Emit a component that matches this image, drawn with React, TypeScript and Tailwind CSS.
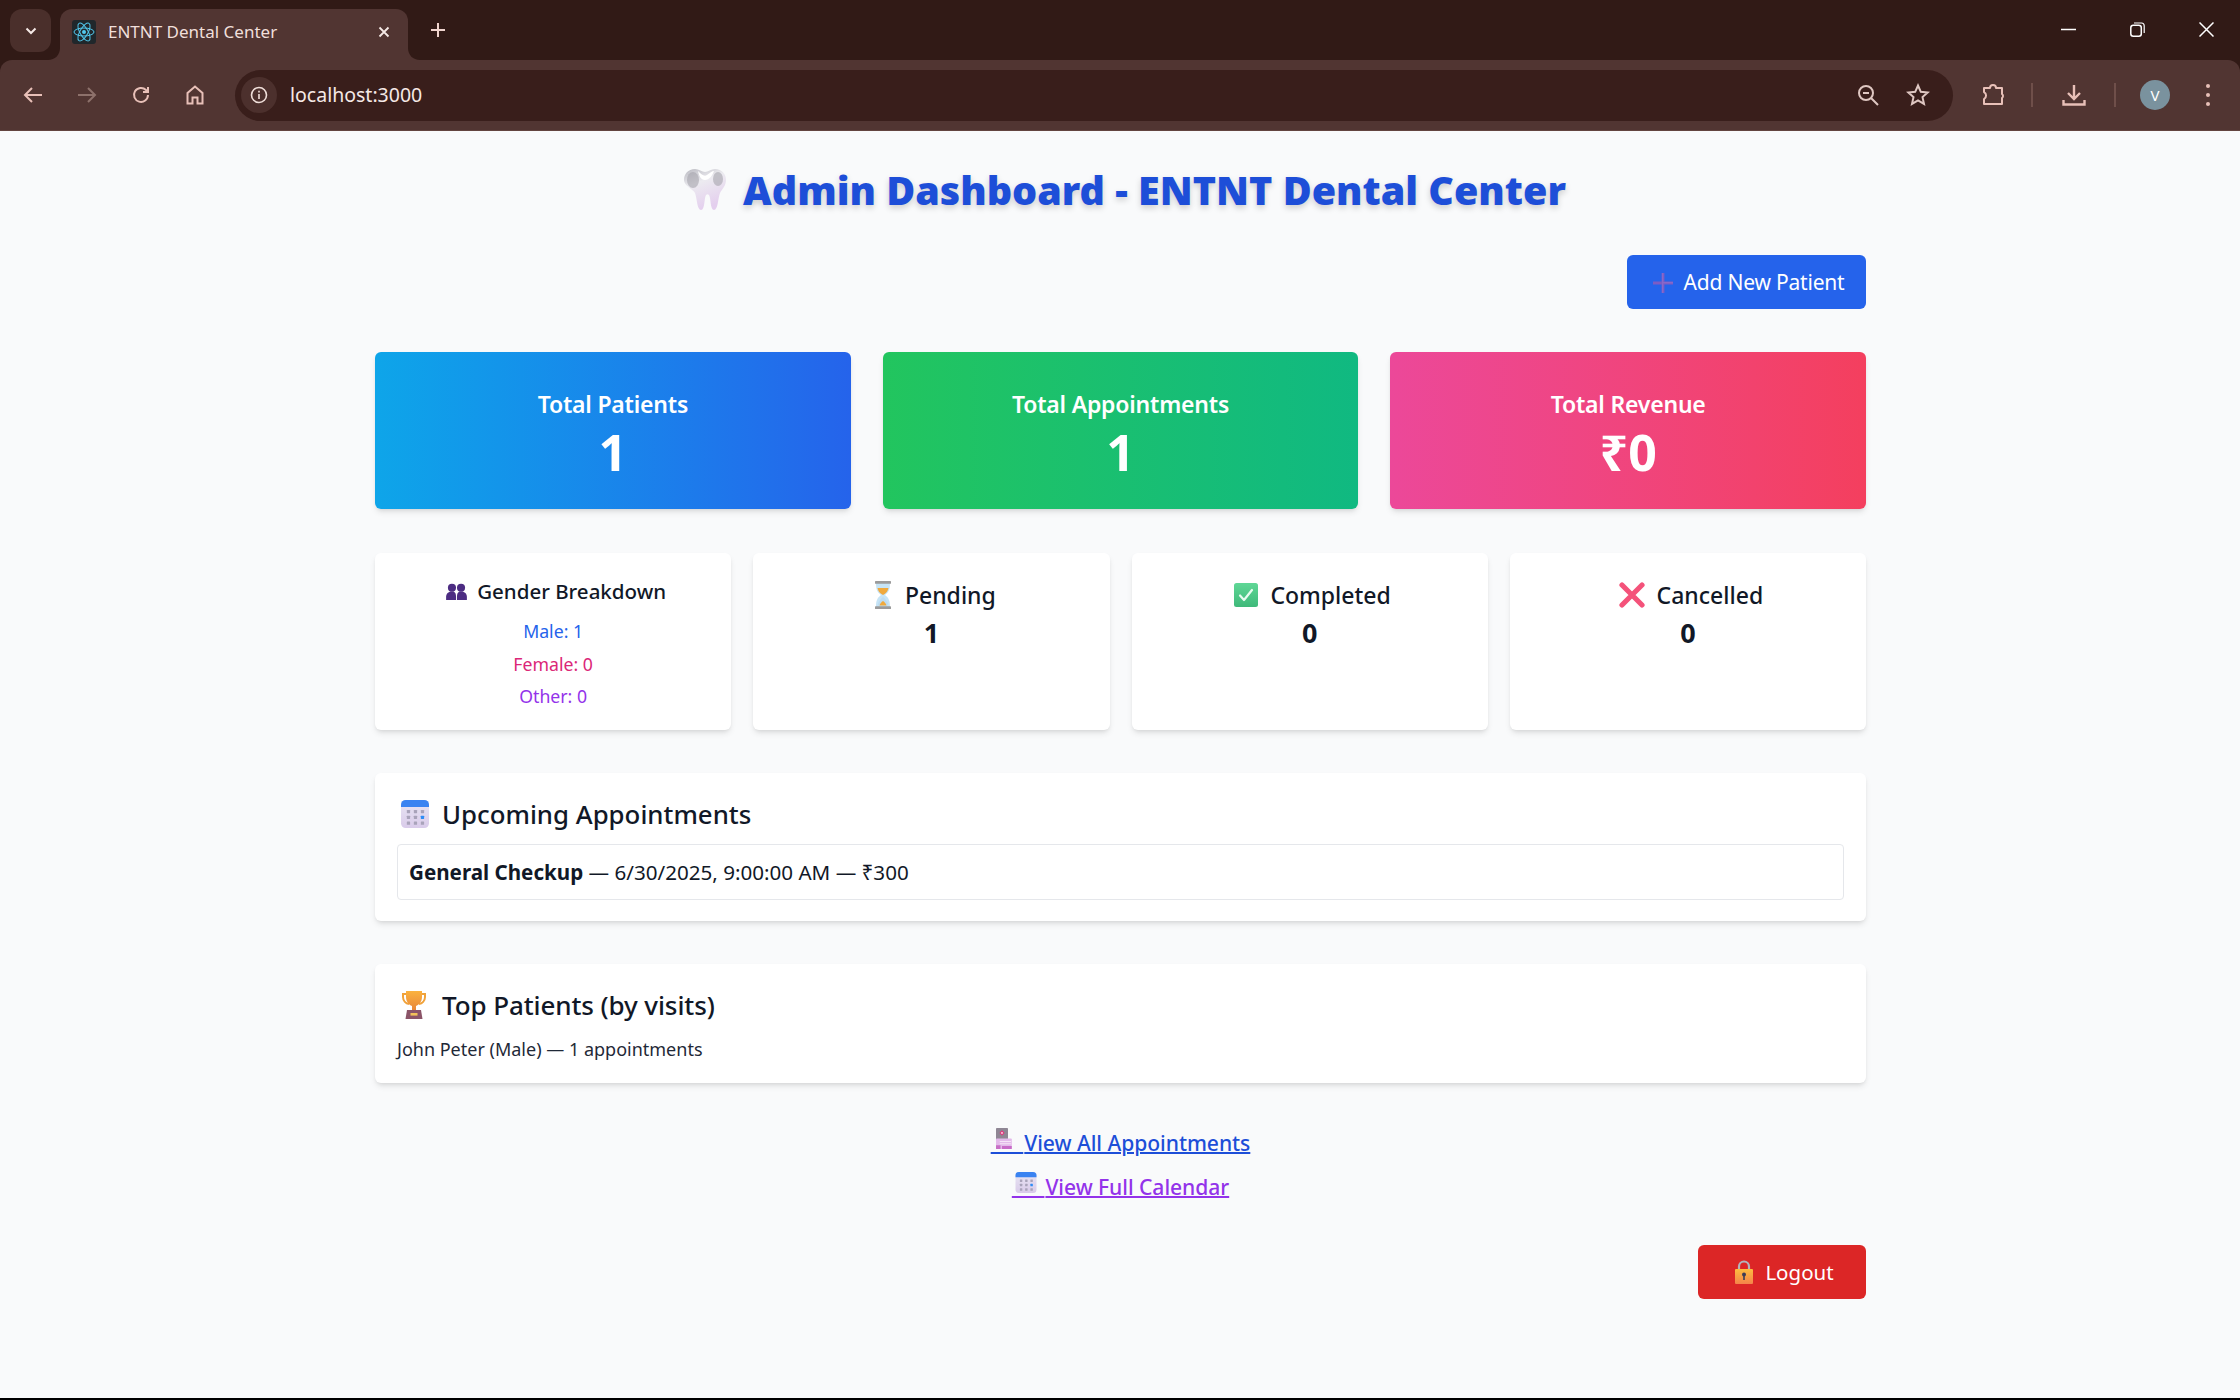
import type { ReactNode } from "react";

const sans = "font-['Noto_Sans','Open_Sans',sans-serif]";

function Tooth({ className }: { className: string }) {
  return (
    <svg viewBox="0 0 44 44" className={className}>
      <defs>
        <linearGradient id="toothFill" x1="0" y1="0" x2="0.4" y2="1">
          <stop offset="0" stopColor="#b9b9c0" />
          <stop offset="0.4" stopColor="#ecebf0" />
          <stop offset="1" stopColor="#e4cfee" />
        </linearGradient>
      </defs>
      <path
        d="M12 1c4 0 7 3 10 3s6-3 10-3c7 0 11 5 11 11 0 6-4 9-6 13-2 5-2 17-6 17-4 0-3-12-5-15-1-1-2-1-3 0-2 3-1 15-5 15-4 0-4-12-6-17C10 21 1 18 1 12 1 6 5 1 12 1z"
        fill="url(#toothFill)"
      />
      <ellipse cx="10" cy="12" rx="6" ry="8" fill="#a5a4ab" opacity="0.6" />
      <ellipse cx="35" cy="11" rx="5" ry="7" fill="#a5a4ab" opacity="0.6" />
      <path d="M15 3c3 3 6 6 9 4 3-2 5-4 7-4-2 6-6 9-9 9-4 0-6-4-7-9z" fill="#ffffff" />
    </svg>
  );
}

function PlusEmoji() {
  return (
    <svg viewBox="0 0 20 20" className="w-5 h-5 shrink-0">
      <path d="M8.6 0h2.8v8.6H20v2.8h-8.6V20H8.6v-8.6H0V8.6h8.6z" fill="#7c5cc4" />
      <path d="M9.2 0h1v9.2H20v1h-9.8V20h-1z" fill="#9a78cf" opacity="0.6" />
    </svg>
  );
}

function People() {
  return (
    <svg viewBox="0 0 22 18" className="w-[21px] h-[17px] shrink-0">
      <g fill="#4c2c82">
        <circle cx="6.2" cy="5" r="4.3" />
        <path d="M0 18v-3.5C0 11.5 2.5 9 5.5 9h1.5c2.5 0 3.5 2.5 3.500 5.500V18z" />
        <circle cx="15.8" cy="5" r="4.3" />
        <path d="M22 18v-3.5c0-3-2.5-5.5-5.5-5.5H15c-2.5 0-3.5 2.5-3.5 5.5V18z" />
      </g>
    </svg>
  );
}

function Hourglass() {
  return (
    <svg viewBox="0 0 20 28" className="w-5 h-7 shrink-0">
      <path d="M3 2h14c0 6-1 9-5 12 4 3 5 6 5 12H3c0-6 1-9 5-12-4-3-5-6-5-12z" fill="#c6e4f6" />
      <path d="M4.500 7h11c-.6 3-2 5-5.500 7-3.500-2-4.900-4-5.500-7z" fill="#f0a93c" />
      <path d="M10 16c-2 1.500-4.500 4-5.500 8.500h11C14.500 20 12 17.500 10 16z" fill="#bcdcf2" />
      <path d="M10 20c-1.500 1-3 2.500-3.500 4.500h7C13 22.500 11.500 21 10 20z" fill="#f0a93c" />
      <rect x="2" y="0" width="16" height="2.800" rx="0.600" fill="#9b9b9b" />
      <rect x="2" y="25.200" width="16" height="2.800" rx="0.600" fill="#9b9b9b" />
    </svg>
  );
}

function CheckBox() {
  return (
    <svg viewBox="0 0 24 24" className="w-6 h-6 shrink-0">
      <defs>
        <linearGradient id="checkFill" x1="0" y1="0" x2="0" y2="1">
          <stop offset="0" stopColor="#5fd796" />
          <stop offset="1" stopColor="#3fb97a" />
        </linearGradient>
      </defs>
      <rect width="24" height="24" rx="2.500" fill="url(#checkFill)" />
      <path d="M6 12.500l4 4.500 8-10" fill="none" stroke="#e8fbf0" strokeWidth="2.200" strokeLinecap="round" strokeLinejoin="round" />
    </svg>
  );
}

function CrossMark() {
  return (
    <svg viewBox="0 0 26 26" className="w-[26px] h-[26px] shrink-0">
      <path d="M3 3l20 20M23 3L3 23" stroke="#f4527a" strokeWidth="5.200" strokeLinecap="round" />
    </svg>
  );
}

function CalendarEmoji({ className }: { className: string }) {
  const dots = [6.5, 11.5, 16.5];
  return (
    <svg viewBox="0 0 24 24" className={className}>
      <defs>
        <linearGradient id="calBody" x1="0" y1="0" x2="0" y2="1">
          <stop offset="0" stopColor="#e9e6f3" />
          <stop offset="1" stopColor="#d9cbea" />
        </linearGradient>
      </defs>
      <rect width="24" height="24" rx="4" fill="url(#calBody)" />
      <path d="M0 6V4a4 4 0 0 1 4-4h16a4 4 0 0 1 4 4v2z" fill="#3a83f1" />
      {dots.map((y) =>
        [5, 11, 17].map((x) => (
          <rect
            key={`${x}-${y}`}
            x={x}
            y={y + 2}
            width="2.800"
            height="2.800"
            rx="0.400"
            fill={x === 17 && y === 11.5 ? "#2f8cf5" : "#a9a3ba"}
          />
        ))
      )}
    </svg>
  );
}

function Trophy() {
  return (
    <svg viewBox="0 0 24 28" className="w-6 h-7 shrink-0">
      <defs>
        <linearGradient id="cup" x1="0" y1="0" x2="0" y2="1">
          <stop offset="0" stopColor="#fbb23e" />
          <stop offset="1" stopColor="#e8873a" />
        </linearGradient>
      </defs>
      <path d="M5 3H1v3c0 4 3 6.500 6 7M19 3h4v3c0 4-3 6.500-6 7" fill="none" stroke="#f0a23a" strokeWidth="2" />
      <path d="M4 0h16v6c0 5-3.500 8-6 9v4h-4v-4C7.500 14 4 11 4 6z" fill="url(#cup)" />
      <path d="M5 19h14l1.500 9h-17z" fill="#8b5468" />
      <rect x="8.500" y="22" width="7" height="2.600" fill="#f3c15a" />
    </svg>
  );
}

function Ledger({ className }: { className: string }) {
  return (
    <svg viewBox="0 0 24 28" className={className}>
      <path d="M2 1a1 1 0 0 1 1-1h14a1 1 0 0 1 1 1v15H2z" fill="#8f8694" />
      <path d="M10 3l3.500 3.500L10 10 6.500 6.500z" fill="#e7357e" />
      <circle cx="10" cy="6.500" r="1.300" fill="#f8dbe8" />
      <rect x="2" y="14" width="21" height="14" rx="1" fill="#e3b9ea" />
      <path d="M7 18h15M7 21h15" stroke="#f6e6f8" strokeWidth="1.300" />
      <rect x="2" y="23" width="6" height="5" fill="#c76fc6" />
      <rect x="10" y="24" width="13" height="4" fill="#c86bc8" />
    </svg>
  );
}

function Lock() {
  return (
    <svg viewBox="0 0 20 24" className="w-5 h-6 shrink-0">
      <defs>
        <linearGradient id="lockBody" x1="0" y1="0" x2="0" y2="1">
          <stop offset="0" stopColor="#fcbc3f" />
          <stop offset="1" stopColor="#f5834a" />
        </linearGradient>
      </defs>
      <path d="M5 10V6.500a5 5 0 0 1 10 0V10" fill="none" stroke="#b3b3bb" strokeWidth="2.200" />
      <rect x="1" y="9" width="18" height="15" rx="1" fill="url(#lockBody)" />
      <circle cx="10" cy="14.500" r="2" fill="#3d3c56" />
      <rect x="9.200" y="15" width="1.600" height="5" fill="#3d3c56" />
    </svg>
  );
}

function Tab() {
  return (
    <div className="relative w-[348px] h-[51px] bg-[#513532] rounded-t-[12px] flex items-center pl-[12px] pr-[18px] pb-[6px]">
      <svg viewBox="0 0 12 12" className="absolute left-[-12px] bottom-0 w-3 h-3">
        <path d="M12 0v12H0c7 0 12-5 12-12z" fill="#513532" />
      </svg>
      <svg viewBox="0 0 12 12" className="absolute right-[-12px] bottom-0 w-3 h-3">
        <path d="M0 0v12h12C5 12 0 7 0 0z" fill="#513532" />
      </svg>
      <svg viewBox="0 0 24 24" className="w-6 h-6 shrink-0 bg-[#20272b] rounded-[3px]">
        <g fill="none" stroke="#52c9ee" strokeWidth="1">
          <ellipse cx="12" cy="12" rx="10" ry="4" />
          <ellipse cx="12" cy="12" rx="10" ry="4" transform="rotate(60 12 12)" />
          <ellipse cx="12" cy="12" rx="10" ry="4" transform="rotate(120 12 12)" />
        </g>
        <circle cx="12" cy="12" r="2" fill="#52c9ee" />
      </svg>
      <span className={`ml-[12px] text-[17px] text-[#f0dfda] whitespace-nowrap ${sans}`}>ENTNT Dental Center</span>
      <svg viewBox="0 0 12 12" className="ml-auto w-3 h-3">
        <path d="M1.500 1.500l9 9M10.500 1.500l-9 9" stroke="#f5e9e6" strokeWidth="1.800" />
      </svg>
    </div>
  );
}

function ToolIcon({ d, color = "#e8c0b8" }: { d: string; color?: string }) {
  return (
    <svg viewBox="0 0 24 24" className="w-6 h-6 shrink-0" fill="none" stroke={color} strokeWidth="2">
      <path d={d} />
    </svg>
  );
}

function BrowserChrome() {
  return (
    <div className="bg-[#311a16] shrink-0">
      <div className="h-[60px] flex items-end pl-[10px]">
        <div className="w-[41px] h-[43px] mb-[8px] bg-[#4a2f2b] rounded-[12px] flex items-center justify-center">
          <svg viewBox="0 0 12 8" className="w-3 h-2">
            <path d="M1.500 1.500L6 6l4.500-4.500" fill="none" stroke="#f5e9e6" strokeWidth="2" />
          </svg>
        </div>
        <div className="ml-[9px]">
          <Tab />
        </div>
        <svg viewBox="0 0 16 16" className="w-4 h-4 ml-[22px] mb-[22px]">
          <path d="M8 1v14M1 8h14" stroke="#f0d4ce" strokeWidth="2" />
        </svg>
        <div className="ml-auto flex items-center mb-[23px] mr-[26px] gap-[54px]">
          <svg viewBox="0 0 15 15" className="w-[15px] h-[15px]">
            <path d="M0 7.500h15" stroke="#ffffff" strokeWidth="1.500" />
          </svg>
          <svg viewBox="0 0 15 15" className="w-[15px] h-[15px]">
            <rect x="0.800" y="3.200" width="10.500" height="11" rx="2.500" fill="none" stroke="#ffffff" strokeWidth="1.500" />
            <path d="M4 1h7.500A2.800 2.800 0 0 1 14.200 3.800V11" fill="none" stroke="#ffffff" strokeWidth="1.200" />
          </svg>
          <svg viewBox="0 0 15 15" className="w-[15px] h-[15px]">
            <path d="M0.500 0.500l14 14M14.500 0.500l-14 14" stroke="#ffffff" strokeWidth="1.500" />
          </svg>
        </div>
      </div>
      <div className="h-[71px] bg-[#513532] rounded-t-[12px] border-b border-[#63443f] flex items-center">
        <div className="flex items-center ml-[21px] gap-[30px]">
          <ToolIcon d="M21 12H4M11 5l-7 7 7 7" />
          <ToolIcon d="M3 12h17M13 5l7 7-7 7" color="#8d716b" />
          <ToolIcon d="M19 12a7 7 0 1 1-2-5l2 2M19 4v5h-5" />
          <ToolIcon d="M4.500 20.500V10L12 3.500 19.500 10v10.500h-5v-6h-5v6z" />
        </div>
        <div className="ml-[28px] w-[1718px] h-[51px] bg-[#391e1b] rounded-full flex items-center pl-[6px] pr-[23px]">
          <div className="w-[36px] h-[36px] rounded-full bg-[#4c302d] flex items-center justify-center">
            <svg viewBox="0 0 18 18" className="w-[18px] h-[18px]" fill="none" stroke="#f0dfda" strokeWidth="1.600">
              <circle cx="9" cy="9" r="7.500" />
              <path d="M9 8v5M9 4.800v1.600" />
            </svg>
          </div>
          <span className={`ml-[13px] text-[19.5px] text-[#f5e9e6] ${sans}`}>localhost:3000</span>
          <svg viewBox="0 0 24 24" className="ml-auto w-6 h-6" fill="none" stroke="#dfc7c2" strokeWidth="2">
            <circle cx="10" cy="10" r="7" />
            <path d="M15 15l7 7M7 10h6" />
          </svg>
          <svg viewBox="0 0 24 24" className="ml-[26px] w-6 h-6" fill="none" stroke="#dfc7c2" strokeWidth="2">
            <path d="M12 2.500l2.800 6.300 6.900.7-5.200 4.600 1.500 6.800-6-3.500-6 3.500 1.500-6.800-5.200-4.600 6.900-.7z" />
          </svg>
        </div>
        <svg viewBox="0 0 24 24" className="ml-[29px] w-6 h-6" fill="none" stroke="#e8c0b8" strokeWidth="2">
          <path d="M2 5h6a3 3 0 0 1 6 0h6v6a2.500 2.500 0 0 1 0 4v6H2v-5a4 4 0 0 0 0-7z" strokeLinejoin="round" />
        </svg>
        <div className="ml-[25px] w-[2px] h-[24px] bg-[#6f4f4a]" />
        <svg viewBox="0 0 24 24" className="ml-[29px] w-6 h-6" fill="none" stroke="#e8c0b8" strokeWidth="2.400">
          <path d="M12 2v13M6 10l6 6 6-6M1.500 17v4.500h21V17" />
        </svg>
        <div className="ml-[28px] w-[2px] h-[24px] bg-[#6f4f4a]" />
        <div className={`ml-[24px] w-[30px] h-[30px] rounded-full bg-[#7a929e] flex items-center justify-center text-[15px] text-white ${sans}`}>V</div>
        <div className="ml-[36px] flex flex-col gap-[5px]">
          <div className="w-1 h-1 rounded-full bg-[#e8c0b8]" />
          <div className="w-1 h-1 rounded-full bg-[#e8c0b8]" />
          <div className="w-1 h-1 rounded-full bg-[#e8c0b8]" />
        </div>
      </div>
    </div>
  );
}

function StatCard({ title, value, colors }: { title: string; value: string; colors: string }) {
  return (
    <div className={`h-[157px] rounded-[6px] shadow-md text-white flex flex-col items-center pt-[34px] ${colors}`}>
      <div className="text-[23px] leading-[36px] font-semibold tracking-[-0.2px]">{title}</div>
      <div className="text-[50px] leading-[60px] font-bold">{value}</div>
    </div>
  );
}

function StatusCard({ icon, label, value }: { icon: ReactNode; label: string; value: string }) {
  return (
    <div className="bg-white rounded-[6px] shadow-md h-[177px] flex flex-col items-center pt-[24px]">
      <div className="h-[36px] flex items-center gap-[12px] pl-[6px] text-[23px] font-medium text-[#111827]">
        {icon}
        <span>{label}</span>
      </div>
      <div className="text-[27px] leading-[38px] font-bold text-[#111827] mt-[1px]">{value}</div>
    </div>
  );
}

function NavLink({ icon, label, color }: { icon: ReactNode; label: string; color: string }) {
  return (
    <a className={`text-[21.1px] leading-[30px] font-medium tracking-[-0.05px] underline decoration-2 whitespace-nowrap ${color}`}>
      <span className="relative pr-[1px]">
        &nbsp;&nbsp;&nbsp;&nbsp;&nbsp;&nbsp;
        <span className="absolute left-[3px] top-0">{icon}</span>
      </span>
      {label}
    </a>
  );
}

export default function App() {
  return (
    <div className={`h-[1400px] w-[2240px] overflow-hidden bg-black flex flex-col ${sans}`}>
      <BrowserChrome />
      <main className="h-[1267px] bg-[#f9fafb] shrink-0">
        <div className="w-[1491px] ml-[375px] flex flex-col pt-[31px]">
          <div className="h-[56px] flex items-center justify-center gap-[16px] pl-[8px]">
            <Tooth className="w-[44px] h-[44px] shrink-0" />
            <h1 className="text-[39.5px] leading-[56px] font-black text-[#1d4ed8] [text-shadow:0_3px_6px_rgba(0,0,0,0.18)] whitespace-nowrap">
              Admin Dashboard - ENTNT Dental Center
            </h1>
          </div>

          <div className="flex justify-end mt-[37px]">
            <button className="w-[239px] h-[54px] bg-[#2563eb] rounded-[6px] text-white text-[21px] tracking-[-0.2px] flex items-center justify-center gap-[11px] pl-[4px] pt-[2px]">
              <PlusEmoji />
              Add New Patient
            </button>
          </div>

          <div className="grid grid-cols-3 gap-[32px] mt-[43px]">
            <StatCard title="Total Patients" value="1" colors="bg-gradient-to-r from-[#0ea5e9] to-[#2563eb]" />
            <StatCard title="Total Appointments" value="1" colors="bg-gradient-to-r from-[#22c55e] to-[#10b981]" />
            <StatCard title="Total Revenue" value="₹0" colors="bg-gradient-to-r from-[#ec4899] to-[#f43f5e]" />
          </div>

          <div className="grid grid-cols-4 gap-[22px] mt-[44px]">
            <div className="bg-white rounded-[6px] shadow-md h-[177px] flex flex-col items-center pt-[20px]">
              <div className="h-[36px] flex items-center gap-[10px] pl-[6px] text-[20.5px] font-medium text-[#111827]">
                <People />
                <span>Gender Breakdown</span>
              </div>
              <div className="mt-[6px] flex flex-col items-center text-[17.7px] leading-[32.5px]">
                <span className="text-[#2563eb]">Male: 1</span>
                <span className="text-[#db2777]">Female: 0</span>
                <span className="text-[#9333ea]">Other: 0</span>
              </div>
            </div>
            <StatusCard icon={<Hourglass />} label="Pending" value="1" />
            <StatusCard icon={<CheckBox />} label="Completed" value="0" />
            <StatusCard icon={<CrossMark />} label="Cancelled" value="0" />
          </div>

          <section className="bg-white rounded-[6px] shadow-md h-[148px] mt-[43px] px-[22px] pt-[23px]">
            <div className="h-[36px] flex items-center gap-[13px] pl-[4px] text-[25.8px] font-medium text-[#111827]">
              <CalendarEmoji className="w-7 h-7 shrink-0" />
              Upcoming Appointments
            </div>
            <div className="mt-[12px] h-[56px] border border-[#e5e7eb] rounded-[4px] flex items-center px-[11px] text-[20.6px] text-[#111827] whitespace-pre">
              <b className="font-bold">General Checkup</b> — 6/30/2025, 9:00:00 AM — ₹300
            </div>
          </section>

          <section className="bg-white rounded-[6px] shadow-md h-[119px] mt-[43px] px-[22px] pt-[23px]">
            <div className="h-[36px] flex items-center gap-[16px] pl-[5px] text-[26px] tracking-[-0.1px] font-medium text-[#111827]">
              <Trophy />
              Top Patients (by visits)
            </div>
            <div className="mt-[11px] text-[18px] leading-[30px] text-[#1f2937]">John Peter (Male) — 1 appointments</div>
          </section>

          <div className="flex flex-col items-center gap-[14px] mt-[45px]">
            <NavLink icon={<Ledger className="w-[19px] h-[21px]" />} label="View All Appointments" color="text-[#1d4ed8]" />
            <NavLink icon={<CalendarEmoji className="w-[22px] h-[21px]" />} label="View Full Calendar" color="text-[#9333ea]" />
          </div>

          <div className="flex justify-end mt-[43px]">
            <button className="w-[168px] h-[54px] bg-[#dc2626] rounded-[6px] text-white text-[20.5px] flex items-center justify-center gap-[11px] pl-[4px]">
              <Lock />
              Logout
            </button>
          </div>
        </div>
      </main>
    </div>
  );
}
